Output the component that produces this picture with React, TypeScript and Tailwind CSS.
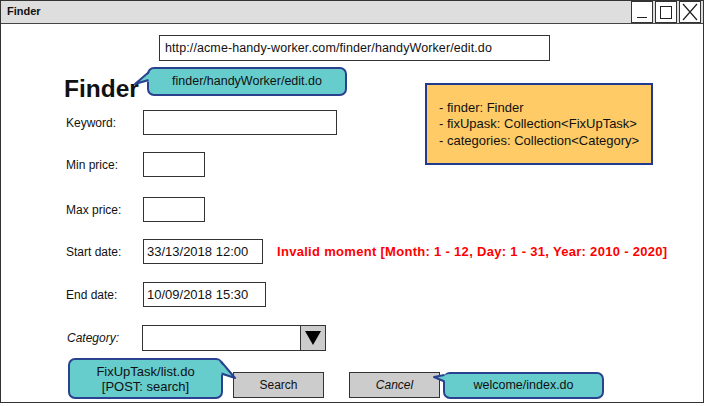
import React from "react";

const TEAL = "#66cccc";
const BLUE = "#2a4190";

type Row = {
  label: string;
  width: string;
  top: string;
  value?: string;
};

const rows: Row[] = [
  { label: "Keyword:", width: "w-[194px]", top: "mt-[8px]" },
  { label: "Min price:", width: "w-[62px]", top: "mt-[17px]" },
  { label: "Max price:", width: "w-[62px]", top: "mt-[20px]" },
  { label: "Start date:", width: "w-[120px]", top: "mt-[17px]", value: "33/13/2018 12:00" },
  { label: "End date:", width: "w-[123px]", top: "mt-[18px]", value: "10/09/2018 15:30" },
];

function TitleButtons() {
  return (
    <div className="flex gap-[2px] h-[23px] items-start">
      <div className="w-[22px] h-[22px] bg-white border border-[#333] flex items-end justify-center pb-[4px]">
        <div className="w-[10px] h-[1.5px] bg-[#222]" />
      </div>
      <div className="w-[22px] h-[22px] bg-white border border-[#333] flex items-center justify-center">
        <div className="w-[12px] h-[13px] border border-[#222]" />
      </div>
      <div className="w-[22px] h-[22px] bg-white border border-[#333] flex items-center justify-center">
        <svg width="16" height="18" viewBox="0 0 16 18">
          <path d="M1 1 L15 17 M15 1 L1 17" stroke="#222" strokeWidth="1.2" fill="none" />
        </svg>
      </div>
    </div>
  );
}

export default function App() {
  return (
    <div
      className="w-[713px] h-[406px] bg-white overflow-hidden"
      style={{ fontFamily: '"Liberation Sans", Arial, sans-serif' }}
    >
      <div className="relative w-[704px] h-[403px] border border-[#333] flex flex-col text-[#111]">
        {/* title bar */}
        <div className="h-[23px] shrink-0 bg-[#dedede] border-b border-[#444] flex items-start justify-between pl-[6px] pr-[2px]">
          <span className="text-[11px] font-bold leading-[21px]">Finder</span>
          <TitleButtons />
        </div>

        {/* url */}
        <div className="mt-[11px] ml-[158px] w-[391px] h-[26px] border border-[#333] flex items-center pl-[5px] text-[12.5px] tracking-[0.1px]">
          http://acme-handy-worker.com/finder/handyWorker/edit.do
        </div>

        <h1 className="mt-[15px] ml-[63px] text-[24.5px] font-bold leading-[26px]">Finder</h1>

        {rows.map((r) => (
          <div key={r.label} className={`${r.top} ml-[65px] flex items-center h-[25px]`}>
            <span className="w-[77px] text-[12px]">{r.label}</span>
            <div className={`${r.width} h-[25px] border border-[#333] flex items-center pl-[3px] text-[13px]`}>
              {r.value}
            </div>
            {r.label === "Start date:" && (
              <span className="ml-[14px] text-[13px] font-bold text-[#ff0000] tracking-[0.3px]">
                Invalid moment [Month: 1 - 12, Day: 1 - 31, Year: 2010 - 2020]
              </span>
            )}
          </div>
        ))}

        {/* category */}
        <div className="mt-[18px] ml-[66px] flex items-center h-[26px]">
          <span className="w-[75px] text-[12px] italic">Category:</span>
          <div className="w-[184px] h-[26px] border border-[#333] flex justify-end">
            <div className="w-[25px] h-full bg-[#cccccc] border-l border-[#333] flex items-center justify-center">
              <svg width="16" height="14" viewBox="0 0 16 14">
                <path d="M0 0 L16 0 L8 14 Z" fill="#000" />
              </svg>
            </div>
          </div>
        </div>

        {/* buttons */}
        <div className="mt-[21px] ml-[232px] flex gap-[25px]">
          <button className="w-[91px] h-[26px] bg-[#cccccc] border border-[#333] text-[12px]">Search</button>
          <button className="w-[91px] h-[26px] bg-[#cccccc] border border-[#333] text-[12px] italic">Cancel</button>
        </div>

        {/* note */}
        <div className="absolute left-[424px] top-[82px] w-[228px] h-[82px] bg-[#fecb66] border-2 border-[#1f3a8f] flex flex-col justify-center pl-[12px] text-[13px] leading-[16.5px] pt-[1px]">
          <span>- finder: Finder</span>
          <span>- fixUpask: Collection&lt;FixUpTask&gt;</span>
          <span>- categories: Collection&lt;Category&gt;</span>
        </div>

        {/* callout: edit */}
        <div
          className="absolute left-[146px] top-[66px] w-[200px] h-[29px] rounded-[7px] border-2 flex items-center justify-center text-[12.5px]"
          style={{ backgroundColor: TEAL, borderColor: BLUE }}
        >
          finder/handyWorker/edit.do
        </div>
        <svg className="absolute left-[132px] top-[66px]" width="22" height="22" viewBox="0 0 22 22">
          <path d="M19 4 L2 17 L19 14 Z" fill={TEAL} />
          <path d="M16 5 L2 17 L15.5 13" fill="none" stroke={BLUE} strokeWidth="2" strokeLinejoin="round" />
        </svg>

        {/* callout: search */}
        <div
          className="absolute left-[67px] top-[357px] w-[155px] h-[41px] rounded-[7px] border-2 flex flex-col items-center justify-center text-[13px] leading-[15px]"
          style={{ backgroundColor: TEAL, borderColor: BLUE }}
        >
          <span>FixUpTask/list.do</span>
          <span>[POST: search]</span>
        </div>
        <svg className="absolute left-[214px] top-[356px]" width="24" height="24" viewBox="0 0 24 24">
          <path d="M3 3 L20 21 L3 17 Z" fill={TEAL} />
          <path d="M6 4.5 L20 21 L6.5 16.5" fill="none" stroke={BLUE} strokeWidth="2" strokeLinejoin="round" />
        </svg>

        {/* callout: cancel */}
        <div
          className="absolute left-[442px] top-[371px] w-[161px] h-[27px] rounded-[7px] border-2 flex items-center justify-center text-[12.5px]"
          style={{ backgroundColor: TEAL, borderColor: BLUE }}
        >
          welcome/index.do
        </div>
        <svg className="absolute left-[431px] top-[370px]" width="20" height="16" viewBox="0 0 20 16">
          <path d="M17 3 L2 6 L17 12 Z" fill={TEAL} />
          <path d="M12.5 4 L2 6 L12.5 10.5" fill="none" stroke={BLUE} strokeWidth="2" strokeLinejoin="round" />
        </svg>
      </div>
    </div>
  );
}
